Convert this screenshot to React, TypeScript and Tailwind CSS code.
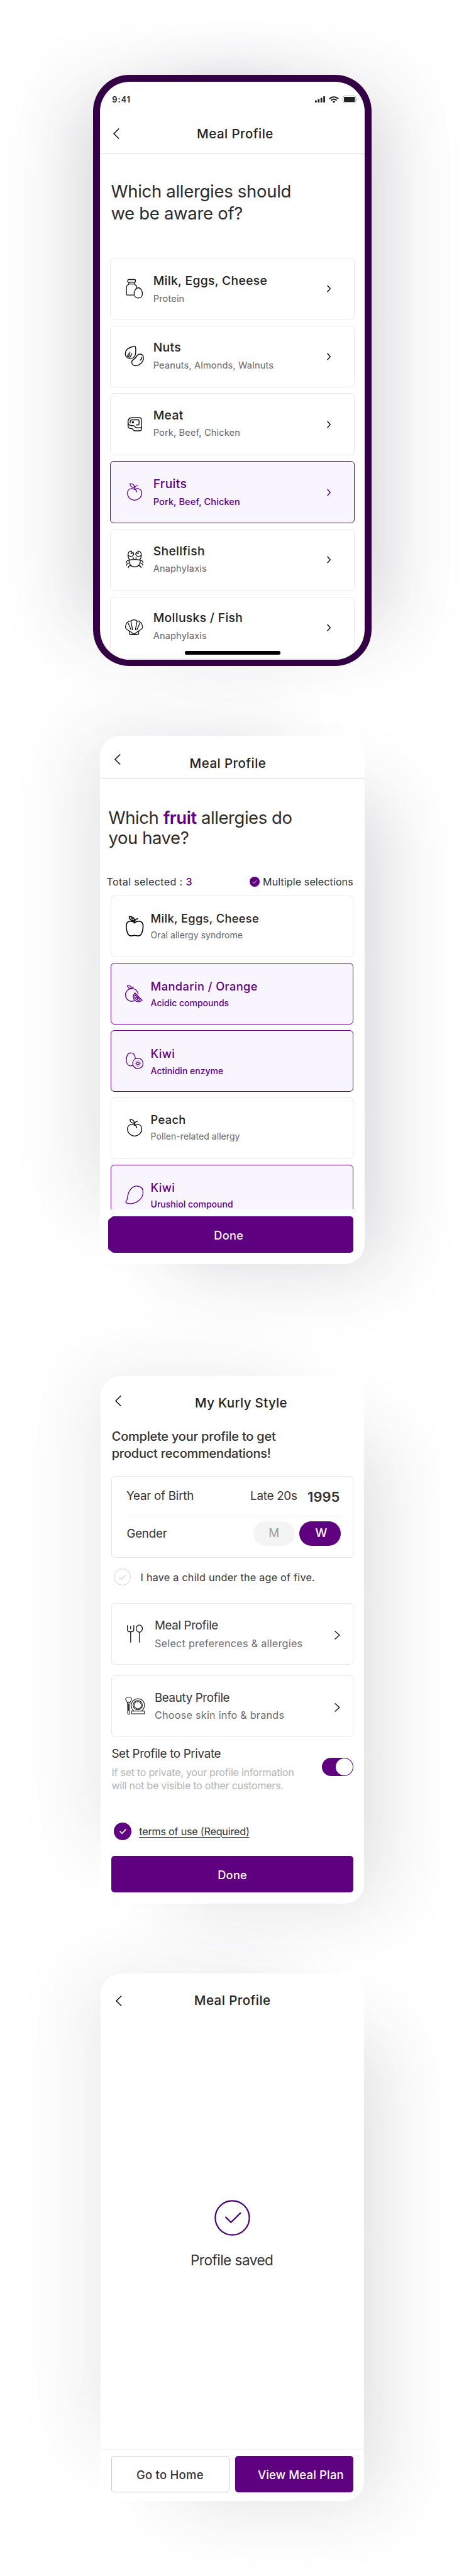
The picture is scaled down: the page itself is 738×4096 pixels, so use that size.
import type { ReactNode } from "react";

function IconBox({ children, className = "" }: { children: ReactNode; className?: string }) {
  return (
    <svg
      viewBox="0 0 32 32"
      className={`h-8 w-8 shrink-0 overflow-visible ${className}`}
      fill="none"
      stroke="currentColor"
      strokeWidth="1.3"
      strokeLinecap="round"
      strokeLinejoin="round"
    >
      {children}
    </svg>
  );
}

const MilkIcon = () => (
  <IconBox>
    <rect x="6.1" y="1.5" width="12.4" height="4.4" rx="1.3" />
    <path d="M8 6v2.7h9V6M8 8.700 4.800 11.600c-.4.4-.6.8-.6 1.400v11.800c0 .8.5 1.300 1.300 1.300h10.200M17 8.700l2.900 2.800c.4.4.5.8.5 1.300v2.200" />
    <path d="M22.900 14.500c3.600 0 6.600 5.300 6.600 9.600 0 4.100-2.800 6.800-6.600 6.800s-6.600-2.700-6.600-6.800c0-4.300 3-9.600 6.600-9.600Z" />
  </IconBox>
);

const NutsIcon = () => (
  <IconBox className="[stroke-width:1.450]">
    <path d="M17-.6c1.400 0 1.900 1.900 1.900 5 0 3.600.3 7.600-1.400 10.600-1.500 2.600-4 4-7 4-5.200 0-8.200-3.400-8.200-7.800C2.300 4.600 9.600 1.400 14 .3c1.200-.4 2-.9 3-.9Z" />
    <path d="M9.700 9c-.7 2-3.300 3.300-4.200 6.500M12.700 11c-.2 2.500-2.300 4-3.700 7.300M9 12.700l-2 4.300" />
    <path d="M25.800 12c3.600 0 5.500 2.700 5.400 6.200-.1 5.900-5.800 12.200-12.400 12.200-4.200 0-6.300-2.600-6.300-5.600 0-4.100 4.700-4.500 6.400-7.300 1.700-2.900 3.300-5.500 6.900-5.500Z" />
    <path d="M28.400 17c.2 1.600-.8 3.600-2.300 4.800" />
  </IconBox>
);

const MeatIcon = () => (
  <IconBox className="[stroke-width:1.450]">
    <path d="M12.500 5.200h12.200c2 0 3.200 1.200 3.200 3.200v12.800h-7.200c-4 0-2.500-3.500-6.200-3.500h-2c-3.500 0-5.900-2-5.900-5.200 0-4.300 2-7.300 5.900-7.300Z" />
    <path d="M6.700 13v4.800c0 3 1.700 4.700 4.700 4.700h1.300c2.400 0 1.800 3.500 4.300 3.500h8.200c1.800 0 2.700-.8 2.700-2.600v-3" />
    <path d="M10 13.500c-.2-3.200.8-5.100 3.700-5.100h8.800c1.200 0 1.700.5 1.700 1.600v5.200c0 1.100-.5 1.600-1.600 1.600h-3" />
    <circle cx="14.400" cy="12.500" r="1.100" fill="currentColor" />
  </IconBox>
);

const FruitIcon = () => (
  <IconBox>
    <path d="M17 11.200c-4.800-2.800-11.200-1.100-11.200 6 0 6.300 5.400 11.100 11.200 11.100s11.400-4.800 11.400-11.100c0-7.100-6.400-8.800-11.400-6Z" />
    <path d="M17 10.600c2 .8 3.200 2.500 3.400 4.800M17 10.600c0-3 1.600-5 4.600-5.400M9.800 2.200c4.200-.3 6.700 1.200 6.900 5.500-4 .4-6.700-1.200-6.900-5.500ZM16.700 7.700l.3 2.900" />
  </IconBox>
);

const CrabIcon = () => (
  <IconBox>
    <path d="M17.200 15.700c3.300 0 6.200.2 8.900.9.400 6.400-3.200 10.900-8.900 10.900s-9.300-4.500-8.900-10.900c2.700-.7 5.600-.9 8.900-.9Z" />
    <path d="M9.300 16.200C7.300 14 6.600 11 6.600 8.200 6.600 5.200 8.500 2.500 12.300 2.200l-.8 4.300 3.300-2.300c1.800 3.200-.2 6.600-3.500 6.600-1.800 0-3.500-.9-4.400-2.200M25.100 16.200c2-2.200 2.700-5.200 2.700-8 0-3-1.900-5.700-5.700-6l.8 4.300-3.300-2.300c-1.800 3.200.2 6.600 3.500 6.600 1.800 0 3.500-.9 4.400-2.200" />
    <path d="M7.800 17.200c-2.500.1-3.700 1.300-3.900 3.700M8.600 21.400c-2.500-.2-4.200 1-4.400 3.600M11.300 25.500c-2.400-.2-4 1-4.400 3.400M26.600 17.200c2.500.1 3.700 1.300 3.900 3.700M25.800 21.400c2.500-.2 4.200 1 4.400 3.600M23.100 25.500c2.400-.2 4 1 4.400 3.400" />
    <circle cx="14.900" cy="13.500" r=".5" fill="currentColor" />
    <circle cx="19.500" cy="13.500" r=".5" fill="currentColor" />
  </IconBox>
);

const ShellIcon = () => (
  <IconBox>
    <path d="M16.100 26.300 4.800 18.700c-2-1.400-3-4-1.700-5.900.1-2.700 1.200-4.600 3.100-5.300.8-1.600 2.800-2.400 5-1.800.8-1.300 2.800-2.200 4.900-2.200s4.100.9 4.900 2.200c2.200-.6 4.200.2 5 1.800 1.900.7 3 2.600 3.100 5.300 1.300 1.900.3 4.500-1.700 5.900Z" />
    <path d="m11.200 5.800 2.700 13.500M6.200 7.600l5.300 12M21 5.800l-2.700 13.500M26 7.600l-5.300 12" />
    <path d="M8.700 21.600v3.600c0 1.200.7 1.800 1.900 1.800h11c1.200 0 1.900-.6 1.900-1.800v-3.600" />
    <path d="M12 26.800c1.700-.9 2.800-1 4.100-1s2.500.1 4.100 1" />
  </IconBox>
);

const AppleIcon = () => (
  <IconBox className="[stroke-width:1.600]">
    <path d="M17.200 10.600c-1.600-2-3.700-2.800-6.300-2.800-5.200 0-7.500 3.600-7.100 9 .3 4.800 1.300 9 3.200 12 1.800 2.800 4.800 2.600 7.200 1.900 2.100-.6 3.900-.6 6 0 2.400.7 5.400.9 7.200-1.900 1.900-3 2.900-7.200 3.200-12 .4-5.400-1.900-9-7.100-9-2.600 0-4.700.8-6.300 2.800Z" />
    <path d="M17.200 10.600V7.300c.8-2 2.500-3.200 5-3.600M8.500.2c5.200-.2 8.500 2.200 8.600 6.900-5 .3-8.500-1.900-8.600-6.900ZM11.500 2.400l3 2.300" />
  </IconBox>
);

const OrangeIcon = () => (
  <IconBox>
    <path d="M14.500 7.900c4.600.9 7.400 4.200 8.200 8.900M17.600 26.900c-1.500.8-3.200 1.200-4.900 1.200-5.700 0-10.100-4.400-10.100-10 0-5.700 4.400-10.200 10.100-10.200.6 0 1.200 0 1.800.1" />
    <path d="M12.600 7.800c.2-1.300 1.200-2.200 2.700-2.500M5.500 3.200c3.600-.6 6.300.9 6.900 4.500C8.800 8.100 6.200 6.700 5.500 3.200Z" />
    <path d="m17.600 14.700 11.500 12c-3.500 2.600-8.100 2.900-11.200.2-3.600-3.100-4-8-.3-12.200Z" />
    <path d="m18 17.800 8 8.200c-2.500 1-4.800.6-6.500-.9-2-1.800-2.600-4.500-1.500-7.300Zm4.100 4.200-4.300.8m4.300-.8-1 4" />
  </IconBox>
);

const KiwiIcon = () => (
  <IconBox>
    <path d="M14.200 22.900c-1.100.6-2.200.9-3.400.9-4.300 0-6.800-3.900-6.800-9.300C4 7.800 6.200 3.200 11 3.200c4.400 0 7.100 3.800 7.200 8.800" />
    <path d="M22.300 11.900c4.900 0 8.200 3.200 8.200 8s-3.300 8.200-8.200 8.200-8.100-3.400-8.100-8.200 3.200-8 8.100-8Z" />
    <circle cx="22.300" cy="20" r="2.100" />
    <g fill="currentColor" stroke="none">
      <circle cx="22.300" cy="15.600" r=".7" />
      <circle cx="22.300" cy="24.400" r=".7" />
      <circle cx="17.900" cy="20" r=".7" />
      <circle cx="26.700" cy="20" r=".7" />
      <circle cx="19.200" cy="16.900" r=".7" />
      <circle cx="25.400" cy="16.900" r=".7" />
      <circle cx="19.200" cy="23.100" r=".7" />
      <circle cx="25.400" cy="23.100" r=".7" />
    </g>
  </IconBox>
);

const MangoIcon = () => (
  <IconBox>
    <path d="M3 26.800c-.8-1.600 1.800-2.400 2.200-4.800C6.400 15 7.200 9.600 11.800 4.800 14.800 1.700 18.400.5 22 1c5.500.7 8.700 4.500 8.500 10.200-.1 8.200-7.700 16.200-17.500 17.400-3 .4-9.100.2-10-1.800Z" />
  </IconBox>
);

const CutleryIcon = () => (
  <IconBox className="[stroke-linecap:butt]">
    <path d="M3.700 2.300v6.600c0 2.400 1.100 3.600 3.300 3.600h3.500c2.200 0 3.300-1.200 3.300-3.600V2.300M8.800 3.500v5M8.800 12.500v17.200M22.600 13.600v16.100" />
    <ellipse cx="22.600" cy="7.600" rx="4.900" ry="5.800" />
  </IconBox>
);

const BeautyIcon = () => (
  <IconBox className="[stroke-width:1.050]">
    <path d="M5.600 1.500c2.200 0 4.800 1.100 4.800 2.900 0 2.400-1.700 3.200-2.700 5.700H3.500C2.500 7.600.8 6.800.8 4.400c0-1.800 2.600-2.900 4.800-2.900ZM3.500 10.100l.6 17.300c0 1 .5 1.600 1.500 1.600s1.500-.6 1.500-1.600l.6-17.300M5.600 12v11" />
    <path d="M13.800 23.600c-6.300-5.300-4.800-15 1.900-18.400 7-3.600 15 1.400 15 9.200 0 3.600-1.400 6.500-4.300 9.200" />
    <circle cx="20.200" cy="14.400" r="7.300" />
    <circle cx="20.200" cy="14.400" r="5.600" />
    <path d="M10 23.700h20.700v4.300H10Z" />
  </IconBox>
);

const Back = ({ className }: { className: string }) => (
  <svg viewBox="0 0 10 17" className={`h-[17px] w-[10px] shrink-0 text-black ${className}`} fill="none" stroke="currentColor" strokeWidth="1.400">
    <path d="M9.200.5 1 8.500l8.200 8" />
  </svg>
);

const Next = ({ className }: { className: string }) => (
  <svg viewBox="0 0 6 12" className={`h-[12px] w-[6px] shrink-0 ${className}`} fill="none" stroke="currentColor" strokeWidth="1.500">
    <path d="M.6.8 5.300 6 .6 11.200" />
  </svg>
);

const NextWide = ({ className }: { className: string }) => (
  <svg viewBox="0 0 9 14" className={`mr-[19.500px] h-[14px] w-[9px] shrink-0 text-black ${className}`} fill="none" stroke="currentColor" strokeWidth="1.200">
    <path d="M.6.500 8 7 .6 13.500" />
  </svg>
);

const Check = ({ className }: { className: string }) => (
  <svg viewBox="0 0 24 24" className={className} fill="none" stroke="currentColor">
    <path d="m7.300 12.200 3.300 3.400 6.200-6.300" />
  </svg>
);

function Status() {
  return (
    <div className="flex h-[52.6px] items-center pt-1 pr-[12px] pl-[19.700px] text-[#222]">
      <span className="flex-1 text-[13px] font-semibold leading-4 tracking-[0.9px]">9:41</span>
      <svg viewBox="0 0 16 10" className="mr-[6px] h-[10px] w-[16px]" fill="currentColor">
        <rect x="0" y="6.400" width="2.800" height="3.600" rx=".8" />
        <rect x="4.400" y="4.600" width="2.800" height="5.400" rx=".8" />
        <rect x="8.800" y="2.400" width="2.800" height="7.600" rx=".8" />
        <rect x="13.200" y="0" width="2.800" height="10" rx=".8" />
      </svg>
      <svg viewBox="0 0 16 11" className="mr-[6px] h-[11px] w-[16px]" fill="none" stroke="currentColor" strokeWidth="2">
        <path d="M.9 4.200C4.800.1 11.200.1 15.100 4.200M3.500 6.700c2.500-2.600 6.500-2.600 9 0" />
        <path d="M8 10.900 5.700 8.600c1.300-1.200 3.300-1.200 4.600 0Z" fill="currentColor" stroke="none" />
      </svg>
      <svg viewBox="0 0 23.500 12" className="h-[12px] w-[23.500px]" fill="currentColor">
        <rect x=".5" y=".5" width="20.500" height="11" rx="2.800" fill="none" stroke="currentColor" strokeOpacity=".4" />
        <rect x="2" y="2" width="17.500" height="8" rx="1.300" />
        <path d="M22.200 4.200c1.400.6 1.400 3 0 3.600Z" opacity=".4" />
      </svg>
    </div>
  );
}

type Row = { icon: ReactNode; title: string; sub: string; pad: string; selected?: boolean };

const groups: Row[] = [
  { icon: <MilkIcon />, title: "Milk, Eggs, Cheese", sub: "Protein", pad: "pt-[22.1px]" },
  { icon: <NutsIcon />, title: "Nuts", sub: "Peanuts, Almonds, Walnuts", pad: "pt-[20.8px]" },
  { icon: <MeatIcon />, title: "Meat", sub: "Pork, Beef, Chicken", pad: "pt-[20.1px]" },
  { icon: <FruitIcon />, title: "Fruits", sub: "Pork, Beef, Chicken", pad: "pt-[21.7px]", selected: true },
  { icon: <CrabIcon />, title: "Shellfish", sub: "Anaphylaxis", pad: "pt-[20.6px]" },
  { icon: <ShellIcon />, title: "Mollusks / Fish", sub: "Anaphylaxis", pad: "pt-[19.3px]" },
];

const fruits: Row[] = [
  { icon: <AppleIcon />, title: "Milk, Eggs, Cheese", sub: "Oral allergy syndrome", pad: "pt-[22.3px]" },
  { icon: <OrangeIcon />, title: "Mandarin / Orange", sub: "Acidic compounds", pad: "pt-[23.5px]", selected: true },
  { icon: <KiwiIcon />, title: "Kiwi", sub: "Actinidin enzyme", pad: "pt-[24.2px]", selected: true },
  { icon: <FruitIcon />, title: "Peach", sub: "Pollen-related allergy", pad: "pt-[21.8px]" },
  { icon: <MangoIcon />, title: "Kiwi", sub: "Urushiol compound", pad: "pt-[22.5px]", selected: true },
];

function AllergyGroups() {
  return (
    <section className="ml-[148px] w-[442.5px] rounded-[58px] bg-[#330043] p-[10.5px] shadow-[70px_-14px_120px_-48px_rgba(50,50,70,0.21),-70px_-14px_120px_-48px_rgba(50,50,70,0.21)]">
      <div className="relative h-[919px] overflow-hidden rounded-[47.500px] bg-white">
        <Status />
        <header className="flex h-[62px] items-center border-b border-[#dedede] pl-[21.8px]">
          <Back className="" />
          <h1 className="ml-[122.8px] text-[20.5px] font-[450] leading-[26px] tracking-[0.43px] text-[#222]">Meal Profile</h1>
        </header>
        <h2 className="mt-[42.8px] pl-[17.900px] text-[27.5px] font-normal leading-[34.7px] tracking-[-0.3px] text-[#2b2b2b]">
          Which allergies should
          <br />
          we be aware of?
        </h2>
        <ul className="mt-[53.3px] ml-[16.600px] flex w-[388.7px] flex-col gap-[9.3px]">
          {groups.map((g) => (
            <li
              key={g.title}
              className={`flex h-[98.5px] items-center rounded-[6px] border pl-[20.5px] ${
                g.selected ? "border-[#5f0080] bg-[#f8f5ff] text-[#5f0080]" : "border-[#e8e8e8] text-[#111]"
              }`}
            >
              {g.icon}
              <div className={`ml-[15.1px] h-full flex-1 ${g.pad}`}>
                <p className={`text-[19.3px] font-[450] leading-[26px] tracking-[0.32px] ${g.selected ? "" : "text-[#222]"}`}>{g.title}</p>
                <p className={`mt-[5.6px] text-[14.6px] leading-5 ${g.selected ? "font-[450] tracking-[0.08px]" : "tracking-[0.15px] text-[#666]"}`}>
                  {g.sub}
                </p>
              </div>
              <Next className="mr-[37px]" />
            </li>
          ))}
        </ul>
        <div className="absolute bottom-[8.3px] left-[135.5px] h-[6px] w-[151.500px] rounded-[2.5px] bg-black" />
      </div>
    </section>
  );
}

function FruitAllergies() {
  return (
    <section className="mt-[111px] ml-[158.5px] h-[839.4px] w-[421px] rounded-[32px] bg-white shadow-[74px_48px_120px_-50px_rgba(55,45,65,0.21),-70px_-44px_120px_-50px_rgba(50,50,70,0.14)]">
      <header className="flex h-[68px] items-start border-b border-[#dedede] pl-[23.5px]">
        <Back className="mt-[29px]" />
        <h1 className="mt-[30.3px] ml-[109.6px] text-[20.5px] font-[450] leading-[26px] tracking-[0.43px] text-[#222]">Meal Profile</h1>
      </header>
      <h2 className="mt-[46px] pl-[14.1px] text-[27.5px] font-normal leading-[32.1px] tracking-[-0.45px] text-[#2b2b2b]">
        Which <span className="font-semibold text-[#5f0080]">fruit</span> allergies do
        <br />
        you have?
      </h2>
      <div className="mt-[43.3px] flex h-5 items-center pl-[11.1px] text-[16.2px] leading-5 text-[#333]">
        <p className="w-[227.7px] tracking-[0.3px]">
          Total selected : <span className="font-medium text-[#5f0080]">3</span>
        </p>
        <span className="h-4 w-4 shrink-0 rounded-full bg-[#5f0080]">
          <Check className="h-4 w-4 text-white [stroke-width:1.300]" />
        </span>
        <p className="ml-[4.8px] whitespace-nowrap text-[16.1px] tracking-[0.08px]">Multiple selections</p>
      </div>
      <div className="mt-[12.5px] h-[498.900px] overflow-hidden">
        <ul className="ml-[17.400px] flex w-[386.3px] flex-col gap-[9px]">
          {fruits.map((f, i) => (
            <li
              key={i}
              className={`flex h-[98px] items-center rounded-[6px] border pl-[20.5px] ${
                f.selected ? "border-[#5f0080] bg-[#f8f5ff] text-[#5f0080]" : "border-[#e8e8e8] text-black"
              }`}
            >
              {f.icon}
              <div className={`ml-[10.2px] h-full flex-1 ${f.pad}`}>
                <p className={`text-[18.3px] leading-6 ${f.selected ? "font-medium tracking-[0.4px]" : "font-[450] tracking-[0.33px] text-[#222]"}`}>{f.title}</p>
                <p className={`mt-[5.4px] text-[14px] leading-5 ${f.selected ? "font-medium" : "tracking-[0.05px] text-[#666]"}`}>{f.sub}</p>
              </div>
            </li>
          ))}
        </ul>
      </div>
      <button className="relative mt-[10.8px] ml-[17.400px] flex h-[58.3px] w-[386.600px] items-center justify-center rounded-[5px] bg-[#5f0080] pt-0.5 pr-[11px] text-[18.2px] font-[450] leading-6 tracking-[0.3px] text-white">
        <span className="absolute top-[2.8px] bottom-[2.8px] left-[-4px] w-3 rounded-l-[5px] bg-[#5f0080]" />
        Done
      </button>
    </section>
  );
}

function Choice({ icon, title, sub, pad, arrow }: { icon: ReactNode; title: string; sub: string; pad: string; arrow: string }) {
  return (
    <div className="flex h-[97.6px] items-center rounded-[6px] border border-[#e8e8e8] pl-[20.5px] text-[#111]">
      {icon}
      <div className={`ml-[15px] h-full flex-1 ${pad}`}>
        <p className="text-[18.8px] leading-6 tracking-[-0.37px] text-[#333]">{title}</p>
        <p className="mt-[4.5px] text-[16.2px] leading-[22px] tracking-[0.25px] text-[#6b6b6b]">{sub}</p>
      </div>
      <NextWide className={arrow} />
    </div>
  );
}

function MyStyle() {
  return (
    <section className="mt-[178px] ml-[160px] h-[839.6px] w-[419.300px] rounded-[32px] bg-white px-[17.400px] text-[#333] shadow-[74px_48px_120px_-50px_rgba(50,50,65,0.16),-70px_-44px_120px_-50px_rgba(50,50,60,0.1)]">
      <header className="flex h-[83.6px] items-start pl-[6.1px]">
        <Back className="mt-[31.7px]" />
        <h1 className="mt-[30.5px] ml-[116.5px] text-[20.5px] font-[450] leading-[26px] tracking-[0.33px] text-[#222]">My Kurly Style</h1>
      </header>
      <h2 className="pl-[0.3px] text-[20px] font-[450] leading-[26.3px] tracking-[-0.23px]">
        Complete your profile to get
        <br />
        product recommendations!
      </h2>
      <div className="mt-[23px] h-[129.7px] rounded-[6px] border border-[#e6e6e6] text-[18.8px] leading-6 tracking-[-0.25px]">
        <div className="mr-[18px] ml-[22.6px] flex h-[63.600px] items-center border-b border-[#ededed] pr-[2.5px]">
          <p className="flex-1">Year of Birth</p>
          <p>Late 20s</p>
          <p className="ml-[16.5px] pt-0.5 text-[22px] font-semibold tracking-normal">1995</p>
        </div>
        <div className="mr-[19.2px] ml-[23px] flex items-center pt-[7.400px]">
          <p className="flex-1 pt-0.5">Gender</p>
          <span className="flex h-[38.700px] w-[65.8px] items-center justify-center rounded-full bg-[#f4f4f4] text-[#999]">M</span>
          <span className="ml-[7.3px] flex h-[38.700px] w-[65.8px] items-center justify-center rounded-full bg-[#5f0080] pl-1 font-[450] text-white">W</span>
        </div>
      </div>
      <div className="mt-[17.5px] flex h-[27px] items-center pl-1">
        <span className="h-[27px] w-[27px] rounded-full border border-[#d4d4d4]">
          <Check className="h-[25px] w-[25px] text-[#d4d4d4] [stroke-width:1.200]" />
        </span>
        <p className="ml-[15.2px] pt-[1.8px] text-[16.2px] leading-5 tracking-[0.23px]">I have a child under the age of five.</p>
      </div>
      <div className="mt-[27.900px] flex flex-col gap-[17.700px]">
        <Choice icon={<CutleryIcon />} title="Meal Profile" sub="Select preferences & allergies" pad="pt-[23.3px]" arrow="mt-[4.800px]" />
        <Choice icon={<BeautyIcon />} title="Beauty Profile" sub="Choose skin info & brands" pad="pt-[22.6px]" arrow="mt-[3.6px]" />
      </div>
      <div className="mt-[14.800px] flex items-start justify-between">
        <div>
          <p className="text-[18.8px] leading-6 tracking-[-0.33px]">Set Profile to Private</p>
          <p className="mt-[7px] text-[16.2px] leading-[21.1px] tracking-[-0.3px] text-[#b5b5b5]">
            If set to private, your profile information
            <br />
            will not be visible to other customers.
          </p>
        </div>
        <span className="mt-[18.200px] flex h-[29.600px] w-[50px] items-center justify-end rounded-full bg-[#5f0080] pr-[1px]">
          <span className="h-[27.400px] w-[27.400px] rounded-full bg-white" />
        </span>
      </div>
      <div className="mt-[48.300px] flex h-[27.400px] items-center pl-1">
        <span className="flex h-[27.400px] w-[27.400px] items-center justify-center rounded-full bg-[#5f0080]">
          <Check className="h-[25px] w-[25px] text-white [stroke-width:1.700]" />
        </span>
        <p className="ml-[12.500px] text-[16.2px] leading-5 tracking-[-0.23px] underline decoration-1 underline-offset-[2.5px]">terms of use (Required)</p>
      </div>
      <button className="mt-[25.6px] flex h-[58.2px] w-full items-center justify-center rounded-[5px] bg-[#5f0080] pt-px text-[18.2px] font-[450] leading-6 tracking-[0.3px] text-white">
        Done
      </button>
    </section>
  );
}

function Saved() {
  return (
    <section className="mt-[110.700px] ml-[160px] flex h-[839px] w-[419.300px] flex-col rounded-[32px] bg-white shadow-[74px_48px_120px_-50px_rgba(50,50,65,0.16),-70px_-44px_120px_-50px_rgba(50,50,60,0.1)]">
      <header className="flex items-center pt-[30.3px] pl-[23.5px]">
        <Back className="" />
        <h1 className="ml-[115.3px] text-[20.5px] font-[450] leading-[26px] tracking-[0.43px] text-[#222]">Meal Profile</h1>
      </header>
      <div className="mt-[303.500px] flex flex-1 flex-col items-center">
        <svg viewBox="0 0 57 57" className="h-[57px] w-[57px] text-[#4b0070]" fill="none" stroke="currentColor" strokeWidth="2.200" strokeLinecap="round">
          <circle cx="28.500" cy="28.500" r="27.100" />
          <path d="m18.200 27.600 8.100 8.100 15-14.800" />
        </svg>
        <p className="mt-[24px] pr-[2px] text-[22.6px] leading-[30px] tracking-[-0.55px] text-[#333]">Profile saved</p>
      </div>
      <div className="flex justify-between border-t border-[#ededed] px-[17.400px] pt-[10px] pb-[14.200px] text-[18.5px] font-[450] leading-6">
        <button className="h-[58px] w-[188px] rounded-[5px] border border-[#ccc] pt-0.5 pr-0.5 tracking-[0.25px] text-[#333]">Go to Home</button>
        <button className="h-[58px] w-[188px] rounded-[5px] bg-[#5f0080] pt-0.5 pl-[21px] tracking-[0.15px] text-white">View Meal Plan</button>
      </div>
    </section>
  );
}

export default function App() {
  return (
    <main className="flex h-[4096px] w-[738px] flex-col items-start overflow-hidden bg-white pt-[119.3px] font-['Inter','Liberation_Sans',sans-serif] antialiased">
      <AllergyGroups />
      <FruitAllergies />
      <MyStyle />
      <Saved />
    </main>
  );
}
